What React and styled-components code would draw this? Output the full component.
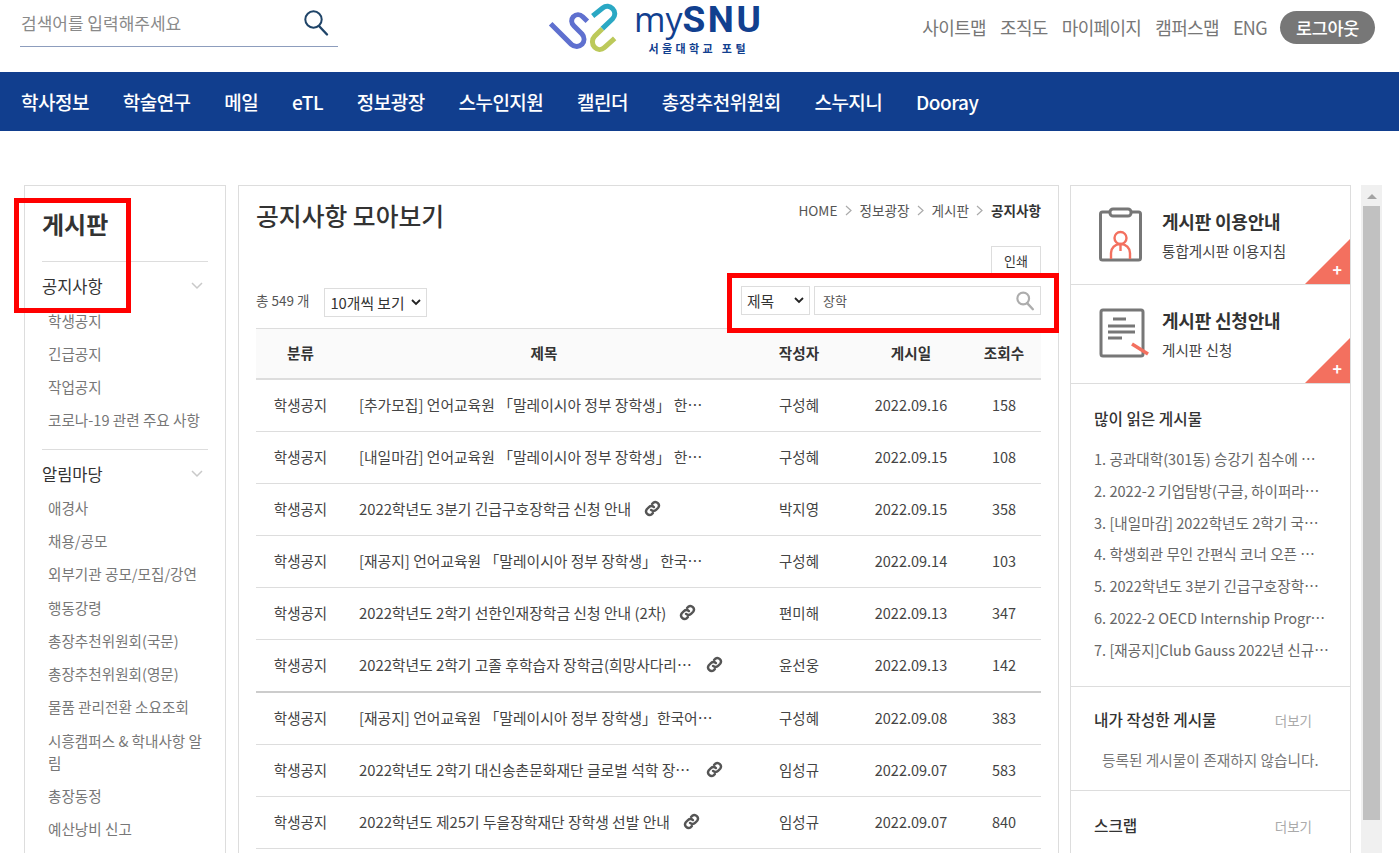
import styled, { createGlobalStyle } from "styled-components";

const GlobalStyle = createGlobalStyle`
  html, body {
    margin: 0;
    padding: 0;
    height: 853px;
    overflow: hidden;
    background: #fff;
    font-family: "Noto Sans CJK KR", "Noto Sans", sans-serif;
    color: #333;
  }
`;

const mainMenu = ["학사정보", "학술연구", "메일", "eTL", "정보광장", "스누인지원", "캘린더", "총장추천위원회", "스누지니", "Dooray"];
const topLinks = ["사이트맵", "조직도", "마이페이지", "캠퍼스맵", "ENG"];

const sideGroups = [
  { title: "공지사항", items: ["학생공지", "긴급공지", "작업공지", "코로나-19 관련 주요 사항"] },
  {
    title: "알림마당",
    items: [
      "애경사",
      "채용/공모",
      "외부기관 공모/모집/강연",
      "행동강령",
      "총장추천위원회(국문)",
      "총장추천위원회(영문)",
      "물품 관리전환 소요조회",
      "시흥캠퍼스 & 학내사항 알림",
      "총장동정",
      "예산낭비 신고",
    ],
  },
];

const rows = [
  { title: "[추가모집] 언어교육원 「말레이시아 정부 장학생」 한국어 연수과정 모집", writer: "구성혜", date: "2022.09.16", hits: 158, width: 344 },
  { title: "[내일마감] 언어교육원 「말레이시아 정부 장학생」 한국어 연수과정 모집", writer: "구성혜", date: "2022.09.15", hits: 108, width: 344 },
  { title: "2022학년도 3분기 긴급구호장학금 신청 안내", writer: "박지영", date: "2022.09.15", hits: 358, link: true },
  { title: "[재공지] 언어교육원 「말레이시아 정부 장학생」 한국어 연수과정 모집", writer: "구성혜", date: "2022.09.14", hits: 103, width: 344 },
  { title: "2022학년도 2학기 선한인재장학금 신청 안내 (2차)", writer: "편미해", date: "2022.09.13", hits: 347, link: true },
  { title: "2022학년도 2학기 고졸 후학습자 장학금(희망사다리 II유형) 신청 안내", writer: "윤선웅", date: "2022.09.13", hits: 142, link: true, width: 334, strong: true },
  { title: "[재공지] 언어교육원 「말레이시아 정부 장학생」한국어 연수과정 모집", writer: "구성혜", date: "2022.09.08", hits: 383, width: 356 },
  { title: "2022학년도 2학기 대신송촌문화재단 글로벌 석학 장학생 선발", writer: "임성규", date: "2022.09.07", hits: 583, link: true, width: 334 },
  { title: "2022학년도 제25기 두을장학재단 장학생 선발 안내", writer: "임성규", date: "2022.09.07", hits: 840, link: true },
];

const popular = [
  { title: "1. 공과대학(301동) 승강기 침수에 따른 운행 중단 안내", width: 226 },
  { title: "2. 2022-2 기업탐방(구글, 하이퍼라이프) 참가자 모집" },
  { title: "3. [내일마감] 2022학년도 2학기 국가장학금 신청 안내" },
  { title: "4. 학생회관 무인 간편식 코너 오픈 안내 및 이용 방법", width: 226 },
  { title: "5. 2022학년도 3분기 긴급구호장학금 신청 안내" },
  { title: "6. 2022-2 OECD Internship Program 참가자 모집 안내" },
  { title: "7. [재공지]Club Gauss 2022년 신규 회원 모집 안내" },
];

const SearchIcon = ({ size = 28, color = "#1f4468", width = 2 }) => (
  <svg width={size} height={size} viewBox="0 0 28 28" fill="none">
    <circle cx="11.500" cy="10.500" r="8.200" stroke={color} strokeWidth={width} />
    <path d="M17 17l8 8.500" stroke={color} strokeWidth={width + 0.4} strokeLinecap="round" />
  </svg>
);

const LinkIcon = () => (
  <svg width="17" height="17" viewBox="0 0 24 24" fill="none" stroke="#555" strokeWidth="3.400" strokeLinecap="round">
    <path d="M10 14a5 5 0 0 0 7 0l3-3a5 5 0 0 0-7-7l-1.500 1.500" />
    <path d="M14 10a5 5 0 0 0-7 0l-3 3a5 5 0 0 0 7 7l1.500-1.500" />
  </svg>
);

const Logo = () => (
  <svg width="73" height="52" viewBox="20 5 219 156" fill="none">
    <path d="M34 70l62 62c10 9 24 8 32 0 8-9 8-22 0-31l-24-24c-9-9-9-20-2-28 8-8 20-8 28 0l14 14" stroke="#5f70cf" strokeWidth="15" />
    <path d="M160 47l30-24c10-8 22-6 30 2 9 9 8 22 0 30l-31 30" stroke="#2aa8c4" strokeWidth="15" />
    <path d="M189 85l-23 23c-9 9-9 24 0 33 8 8 20 9 29 1l31-28" stroke="#bcc95a" strokeWidth="15" />
  </svg>
);

const DocIcon = () => (
  <svg width="46" height="56" viewBox="0 0 46 56" fill="none">
    <rect x="2.500" y="5" width="40" height="48" rx="2" stroke="#777" strokeWidth="3" fill="#fff" />
    <rect x="12" y="2" width="21" height="7" rx="3" stroke="#777" strokeWidth="3" fill="#fff" />
    <circle cx="22.500" cy="31" r="6" stroke="#f3705f" strokeWidth="2.400" />
    <path d="M13 52v-6c0-5 4-9 9.500-9s9.500 4 9.500 9v6M22.500 37v7" stroke="#f3705f" strokeWidth="2.400" />
  </svg>
);

const FormIcon = () => (
  <svg width="52" height="52" viewBox="0 0 52 52" fill="none">
    <rect x="3" y="2" width="42" height="46" rx="2" stroke="#777" strokeWidth="3" fill="#fff" />
    <path d="M15 11h13M10 18h27M10 24h27M10 30h14" stroke="#777" strokeWidth="3" />
    <path d="M34 36l16 10" stroke="#f3705f" strokeWidth="3.400" />
  </svg>
);

const Chevron = () => (
  <svg width="12" height="8" viewBox="0 0 12 8" fill="none">
    <path d="M1 1l5 5 5-5" stroke="#c9c9c9" strokeWidth="1.500" />
  </svg>
);

const SelectArrow = () => (
  <svg width="10" height="7" viewBox="0 0 10 7" fill="none">
    <path d="M1 1l4 4 4-4" stroke="#222" strokeWidth="1.800" />
  </svg>
);

const Crumb = () => (
  <svg width="7" height="11" viewBox="0 0 7 11" fill="none">
    <path d="M1 1l5 4.500-5 4.500" stroke="#aaa" strokeWidth="1.200" />
  </svg>
);

export default function App() {
  return (
    <>
      <GlobalStyle />
      <Header>
        <SearchBox>
          <SearchHint>검색어를 입력해주세요</SearchHint>
          <SearchIcon />
        </SearchBox>
        <LogoArea>
          <Logo />
          <LogoText>
            <LogoName>
              <LogoMy>my</LogoMy>
              <LogoSnu>SNU</LogoSnu>
            </LogoName>
            <LogoSub>서울대학교 포털</LogoSub>
          </LogoText>
        </LogoArea>
        <TopLinks>
          {topLinks.map((link) => (
            <TopLink key={link}>{link}</TopLink>
          ))}
          <LogoutButton>로그아웃</LogoutButton>
        </TopLinks>
      </Header>

      <MainNav>
        {mainMenu.map((menu) => (
          <MainNavItem key={menu}>{menu}</MainNavItem>
        ))}
      </MainNav>

      <Page>
        <LeftPanel>
          <PanelTitleWrap>
            <PanelTitle>게시판</PanelTitle>
            <RedBox $left={-28} $top={12} $width={117} $height={115} />
          </PanelTitleWrap>
          {sideGroups.map((group) => (
            <SideGroup key={group.title}>
              <SideGroupTitle>
                {group.title}
                <Chevron />
              </SideGroupTitle>
              {group.items.map((item) => (
                <SideItem key={item}>{item}</SideItem>
              ))}
            </SideGroup>
          ))}
        </LeftPanel>

        <Content>
          <TitleRow>
            <PageTitle>공지사항 모아보기</PageTitle>
            <Breadcrumb>
              <span>HOME</span>
              <Crumb />
              <span>정보광장</span>
              <Crumb />
              <span>게시판</span>
              <Crumb />
              <CurrentCrumb>공지사항</CurrentCrumb>
            </Breadcrumb>
          </TitleRow>
          <PrintRow>
            <PrintButton>인쇄</PrintButton>
          </PrintRow>
          <FilterRow>
            <FilterLeft>
              <TotalCount>총 549 개</TotalCount>
              <FakeSelect $width={103}>
                10개씩 보기
                <SelectArrow />
              </FakeSelect>
            </FilterLeft>
            <FilterRight>
              <FakeSelect $width={69}>
                제목
                <SelectArrow />
              </FakeSelect>
              <KeywordBox>
                장학
                <SearchIcon size={20} color="#adadad" width={3} />
              </KeywordBox>
              <RedBox $left={-14} $top={-13} $width={332} $height={60} />
            </FilterRight>
          </FilterRow>

          <Table>
            <HeadRow>
              <Cell $w={89}>분류</Cell>
              <TitleHead>제목</TitleHead>
              <Cell $w={112}>작성자</Cell>
              <Cell $w={112}>게시일</Cell>
              <Cell $w={74}>조회수</Cell>
            </HeadRow>
            {rows.map((row) => (
              <BodyRow key={row.title} $strong={row.strong}>
                <Cell $w={89}>학생공지</Cell>
                <TitleCell>
                  <TitleText $width={row.width}>{row.title}</TitleText>
                  {row.link && <LinkIcon />}
                </TitleCell>
                <Cell $w={112}>{row.writer}</Cell>
                <Cell $w={112}>{row.date}</Cell>
                <Cell $w={74}>{row.hits}</Cell>
              </BodyRow>
            ))}
          </Table>
        </Content>

        <RightPanel>
          <GuideCard>
            <GuideIcon>
              <DocIcon />
            </GuideIcon>
            <div>
              <GuideTitle>게시판 이용안내</GuideTitle>
              <GuideSub>통합게시판 이용지침</GuideSub>
            </div>
            <PlusCorner>+</PlusCorner>
          </GuideCard>
          <GuideCard>
            <GuideIcon>
              <FormIcon />
            </GuideIcon>
            <div>
              <GuideTitle>게시판 신청안내</GuideTitle>
              <GuideSub>게시판 신청</GuideSub>
            </div>
            <PlusCorner>+</PlusCorner>
          </GuideCard>
          <PopularSection>
            <SectionTitle>많이 읽은 게시물</SectionTitle>
            {popular.map((item) => (
              <PopularItem key={item.title} $width={item.width}>
                {item.title}
              </PopularItem>
            ))}
          </PopularSection>
          <MineSection>
            <SectionHead>
              <SectionTitle>내가 작성한 게시물</SectionTitle>
              <MoreLink>더보기</MoreLink>
            </SectionHead>
            <EmptyText>등록된 게시물이 존재하지 않습니다.</EmptyText>
          </MineSection>
          <ScrapSection>
            <SectionHead>
              <SectionTitle>스크랩</SectionTitle>
              <MoreLink>더보기</MoreLink>
            </SectionHead>
          </ScrapSection>
        </RightPanel>

        <ScrollTrack>
          <ScrollArrow />
          <ScrollThumb />
        </ScrollTrack>
      </Page>
    </>
  );
}

const Header = styled.header`
  height: 72px;
  display: flex;
  align-items: flex-start;
  padding: 0 24px 0 20px;
`;

const SearchBox = styled.div`
  width: 318px;
  height: 47px;
  flex: none;
  box-sizing: border-box;
  border-bottom: 1px solid #8d9dbd;
  display: flex;
  align-items: center;
  justify-content: space-between;
  padding: 0 8px 0 1px;
`;

const SearchHint = styled.span`
  font-size: 17px;
  color: #8a8a8a;
  margin-bottom: 2px;
`;

const LogoArea = styled.div`
  display: flex;
  align-items: flex-start;
  margin-left: 208px;
  padding-top: 2px;
`;

const LogoText = styled.div`
  display: flex;
  flex-direction: column;
  align-items: center;
  margin-left: 15px;
  margin-top: -3px;
`;

const LogoName = styled.div`
  display: flex;
  align-items: baseline;
  height: 41px;
  line-height: 40px;
`;

const LogoMy = styled.span`
  font-family: "Open Sans", sans-serif;
  font-size: 34px;
  color: #11408f;
`;

const LogoSnu = styled.span`
  font-family: "Roboto", sans-serif;
  font-weight: 700;
  font-size: 37px;
  letter-spacing: 2.500px;
  color: #11408f;
`;

const LogoSub = styled.span`
  font-size: 11px;
  font-weight: 700;
  letter-spacing: 3.400px;
  color: #11408f;
  line-height: 16px;
`;

const TopLinks = styled.div`
  margin-left: auto;
  display: flex;
  align-items: center;
  gap: 14px;
  height: 54px;
`;

const TopLink = styled.a`
  font-size: 18px;
  letter-spacing: -0.650px;
  color: #777;
`;

const LogoutButton = styled.button`
  width: 95px;
  height: 33px;
  margin-left: -1px;
  border: 0;
  border-radius: 17px;
  background: #777;
  color: #fff;
  font: 500 17.500px "Noto Sans CJK KR", sans-serif;
  letter-spacing: -0.400px;
  padding: 0;
`;

const MainNav = styled.nav`
  height: 59px;
  background: #113e8e;
  display: flex;
  align-items: center;
  gap: 33.750px;
  padding-left: 21px;
`;

const MainNavItem = styled.a`
  font-size: 19px;
  font-weight: 500;
  letter-spacing: -0.500px;
  color: #fff;
`;

const Page = styled.main`
  display: flex;
  align-items: flex-start;
  margin-top: 54px;
  padding-left: 24px;
  height: 668px;
  overflow: hidden;
`;

const LeftPanel = styled.aside`
  width: 202px;
  flex: none;
  box-sizing: border-box;
  border: 1px solid #ddd;
  padding: 0 17px;
  min-height: 700px;
`;

const PanelTitleWrap = styled.div`
  position: relative;
  height: 75px;
  border-bottom: 1px solid #ddd;
`;

const PanelTitle = styled.h2`
  margin: 0;
  padding-top: 20px;
  font-size: 24px;
  line-height: 36px;
  font-weight: 700;
  color: #333;
`;

const RedBox = styled.div`
  position: absolute;
  left: ${(p) => p.$left}px;
  top: ${(p) => p.$top}px;
  width: ${(p) => p.$width}px;
  height: ${(p) => p.$height}px;
  box-sizing: border-box;
  border: 5px solid #ff0000;
  pointer-events: none;
`;

const SideGroupTitle = styled.div`
  display: flex;
  align-items: center;
  justify-content: space-between;
  height: 26px;
  padding-right: 5px;
  font-size: 16.500px;
  color: #333;
  margin-bottom: 5px;
`;

const SideGroup = styled.section`
  padding-bottom: 12px;
  margin-bottom: 11px;
  border-bottom: 1px solid #ddd;

  &:first-of-type {
    padding-top: 11px;
  }

  &:last-of-type {
    border-bottom: 0;
  }

  &:last-of-type ${SideGroupTitle} {
    margin-bottom: 4px;
  }
`;

const SideItem = styled.div`
  padding: 5.650px 0 5.650px 6px;
  font-size: 14.600px;
  line-height: 22px;
  color: #777;
`;

const Content = styled.section`
  width: 821px;
  height: 700px;
  flex: none;
  box-sizing: border-box;
  margin-left: 12px;
  border: 1px solid #ddd;
  padding: 0 17px;
`;

const TitleRow = styled.div`
  display: flex;
  justify-content: space-between;
  height: 60px;
`;

const PageTitle = styled.h1`
  margin: 0;
  padding-top: 11px;
  font-size: 24.800px;
  line-height: 36px;
  font-weight: 500;
  color: #333;
`;

const Breadcrumb = styled.div`
  display: flex;
  align-items: center;
  gap: 7.500px;
  height: 48px;
  font-size: 13.600px;
  color: #555;
`;

const CurrentCrumb = styled.strong`
  font-weight: 700;
  color: #333;
`;

const PrintRow = styled.div`
  display: flex;
  justify-content: flex-end;
`;

const PrintButton = styled.button`
  width: 50px;
  height: 28px;
  background: #fff;
  border: 1px solid #ddd;
  font: 400 13px "Noto Sans CJK KR", sans-serif;
  color: #333;
  padding: 0;
`;

const FilterRow = styled.div`
  display: flex;
  align-items: flex-start;
  justify-content: space-between;
  height: 29px;
  margin-top: 12px;
`;

const FilterLeft = styled.div`
  display: flex;
  align-items: center;
  gap: 15px;
  padding-top: 2px;
`;

const TotalCount = styled.span`
  font-size: 13.500px;
  color: #555;
  margin-bottom: 5px;
`;

const FakeSelect = styled.div`
  width: ${(p) => p.$width}px;
  height: 29px;
  box-sizing: border-box;
  border: 1px solid #ddd;
  padding: 0 5px;
  display: flex;
  align-items: center;
  justify-content: space-between;
  font-size: 14.800px;
  color: #333;
  background: #fff;
`;

const FilterRight = styled.div`
  position: relative;
  display: flex;
  gap: 4px;
`;

const KeywordBox = styled.div`
  width: 227px;
  height: 29px;
  box-sizing: border-box;
  border: 1px solid #ddd;
  padding: 0 5px 0 8px;
  display: flex;
  align-items: center;
  justify-content: space-between;
  font-size: 13px;
  color: #555;
`;

const Table = styled.div`
  margin-top: 13px;
`;

const HeadRow = styled.div`
  display: flex;
  align-items: center;
  height: 52px;
  box-sizing: border-box;
  padding-bottom: 2px;
  background: #fafafa;
  border-top: 1px solid #ddd;
  border-bottom: 2px solid #ddd;
  font-size: 14.600px;
  font-weight: 700;
  color: #333;
`;

const BodyRow = styled.div`
  display: flex;
  align-items: center;
  height: 52.100px;
  box-sizing: border-box;
  padding-bottom: 2px;
  border-bottom: ${(p) => (p.$strong ? "2px solid #ccc" : "1px solid #ddd")};
  font-size: 14.500px;
  color: #444;
`;

const Cell = styled.div`
  width: ${(p) => p.$w}px;
  flex: none;
  text-align: center;
`;

const TitleHead = styled.div`
  flex: 1;
  text-align: center;
`;

const TitleCell = styled.div`
  flex: 1;
  min-width: 0;
  display: flex;
  align-items: center;
  gap: 13px;
  padding-left: 14px;
  font-size: 14.800px;

  svg {
    flex: none;
  }
`;

const TitleText = styled.span`
  max-width: ${(p) => (p.$width ? `${p.$width}px` : "none")};
  white-space: nowrap;
  overflow: hidden;
  text-overflow: ellipsis;
`;

const RightPanel = styled.aside`
  width: 281px;
  height: 700px;
  flex: none;
  box-sizing: border-box;
  margin-left: 11px;
  border: 1px solid #ddd;
`;

const GuideCard = styled.div`
  position: relative;
  height: 99px;
  box-sizing: border-box;
  border-bottom: 1px solid #ddd;
  display: flex;
  align-items: center;
  gap: 18px;
  padding-left: 27px;
`;

const GuideIcon = styled.div`
  width: 46px;
  display: flex;

  svg {
    flex: none;
  }
`;

const GuideTitle = styled.div`
  font-size: 18px;
  font-weight: 700;
  letter-spacing: -0.200px;
  color: #333;
  line-height: 24px;
`;

const GuideSub = styled.div`
  font-size: 14.600px;
  color: #444;
  line-height: 20px;
  margin-top: 8px;
`;

const PlusCorner = styled.span`
  position: absolute;
  right: 0;
  bottom: 0;
  width: 45px;
  height: 45px;
  box-sizing: border-box;
  padding: 19px 8px 0 0;
  text-align: right;
  background: #f3705f;
  clip-path: polygon(100% 0, 100% 100%, 0 100%);
  color: #fff;
  font-size: 16px;
  font-weight: 700;
  line-height: 22px;
`;

const PopularSection = styled.div`
  height: 303px;
  box-sizing: border-box;
  border-bottom: 1px solid #ddd;
  padding: 24px 20px 0 23px;
`;

const SectionTitle = styled.div`
  font-size: 15.700px;
  font-weight: 500;
  color: #333;
  line-height: 22px;
`;

const PopularItem = styled.div`
  max-width: ${(p) => (p.$width ? `${p.$width}px` : "none")};
  font-size: 14.600px;
  line-height: 20px;
  color: #666;
  margin-top: 11.800px;
  white-space: nowrap;
  overflow: hidden;
  text-overflow: ellipsis;

  ${SectionTitle} + & {
    margin-top: 19px;
  }
`;

const SectionHead = styled.div`
  display: flex;
  align-items: center;
  justify-content: space-between;
  padding-right: 38px;
`;

const MoreLink = styled.span`
  font-size: 13.500px;
  color: #aaa;
`;

const MineSection = styled.div`
  height: 104px;
  box-sizing: border-box;
  border-bottom: 1px solid #ddd;
  padding: 22px 0 0 23px;
`;

const EmptyText = styled.div`
  margin-top: 19px;
  font-size: 14.700px;
  line-height: 20px;
  color: #777;
  padding-left: 8px;
`;

const ScrapSection = styled.div`
  padding: 24px 0 0 23px;
`;

const ScrollTrack = styled.div`
  width: 21px;
  flex: none;
  height: 668px;
  margin-left: 10px;
  background: #f0f0f0;
`;

const ScrollArrow = styled.div`
  width: 0;
  height: 0;
  margin: 0 auto;
  padding-top: 9px;
  border-left: 5px solid transparent;
  border-right: 5px solid transparent;
  border-bottom: 5px solid #a3a3a3;
  background-clip: content-box;
`;

const ScrollThumb = styled.div`
  width: 17px;
  height: 614px;
  margin: 7px auto 0;
  background: #c1c1c1;
`;
